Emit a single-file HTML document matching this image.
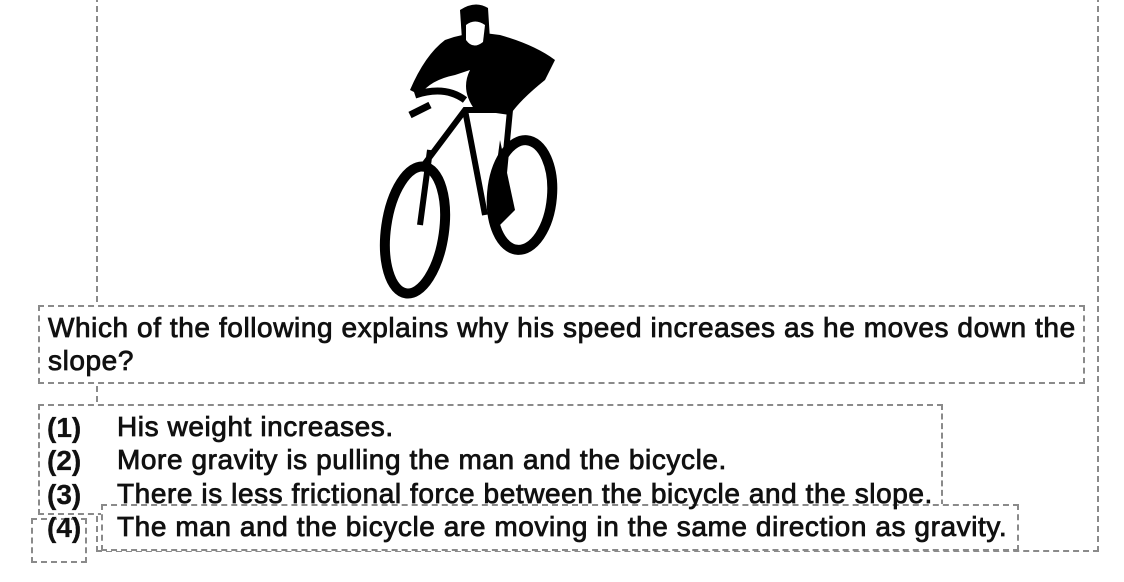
<!DOCTYPE html>
<html><head><meta charset="utf-8"><style>
html,body{margin:0;padding:0;background:#fff;}
body{width:1124px;height:582px;position:relative;overflow:hidden;font-family:"Liberation Sans",Arial,sans-serif;color:#111;}
.b{position:absolute;border:2px dashed #8a8a8a;box-sizing:border-box;}
.t{position:absolute;font-size:28px;white-space:nowrap;-webkit-text-stroke:0.8px #111;letter-spacing:0.58px;}
.n{font-weight:bold;-webkit-text-stroke:0.3px #111;letter-spacing:0;}
</style></head><body>
<div class="b" style="left:96px;top:-4px;width:1003px;height:556px;"></div>
<div class="b" style="left:31px;top:518px;width:56px;height:45px;"></div>
<div style="position:absolute;left:40px;top:306px;width:1043px;height:76px;background:#fff;"></div>
<div style="position:absolute;left:40px;top:406px;width:901px;height:107px;background:#fff;"></div>
<div class="b" style="left:38px;top:305px;width:1047px;height:79px;"></div>
<div class="b" style="left:38px;top:404px;width:905px;height:111px;"></div>
<div class="b" style="left:101px;top:504px;width:918px;height:47px;background:#fff"></div>
<div class="t" style="left:48px;top:312px;">Which of the following explains why his speed increases as he moves down the</div>
<div class="t" style="left:48px;top:345px;">slope?</div>
<div class="t n" style="left:47px;top:412px;">(1)</div>
<div class="t n" style="left:47px;top:445px;">(2)</div>
<div class="t n" style="left:47px;top:479px;">(3)</div>
<div class="t n" style="left:47px;top:512px;">(4)</div>
<div class="t" style="left:117px;top:411px;">His weight increases.</div>
<div class="t" style="left:117px;top:444px;">More gravity is pulling the man and the bicycle.</div>
<div class="t" style="left:117px;top:478px;">There is less frictional force between the bicycle and the slope.</div>
<div class="t" style="left:117px;top:511px;">The man and the bicycle are moving in the same direction as gravity.</div>
<svg style="position:absolute;left:370px;top:0" width="200" height="300" viewBox="0 0 200 300">
<g fill="none" stroke="#000">
<ellipse cx="45" cy="230" rx="29" ry="64" stroke-width="10" transform="rotate(8 45 230)"/>
<ellipse cx="152" cy="195" rx="30" ry="55" stroke-width="10" transform="rotate(5 152 195)"/>
<path d="M50 170 L95 110 L140 110 L130 215 M95 110 L115 215 M50 225 L60 150" stroke-width="6"/>
<path d="M45 95 Q75 85 95 100 M60 105 L40 115" stroke-width="7"/>
</g>
<path d="M75 40 Q100 30 130 35 Q165 45 185 60 L175 80 Q150 100 140 115 L105 110 Q90 90 100 70 L85 75 Q60 80 50 95 L40 90 Q55 55 75 40Z" fill="#000"/>
<path d="M90 10 Q105 0 118 8 L120 40 Q105 52 92 40Z" fill="#000"/>
<path d="M96 25 Q105 18 115 25 L113 42 Q103 50 96 40Z" fill="#fff"/>
<path d="M130 140 L145 210 L130 225 L120 215Z" fill="#000"/>
</svg>
</body></html>
